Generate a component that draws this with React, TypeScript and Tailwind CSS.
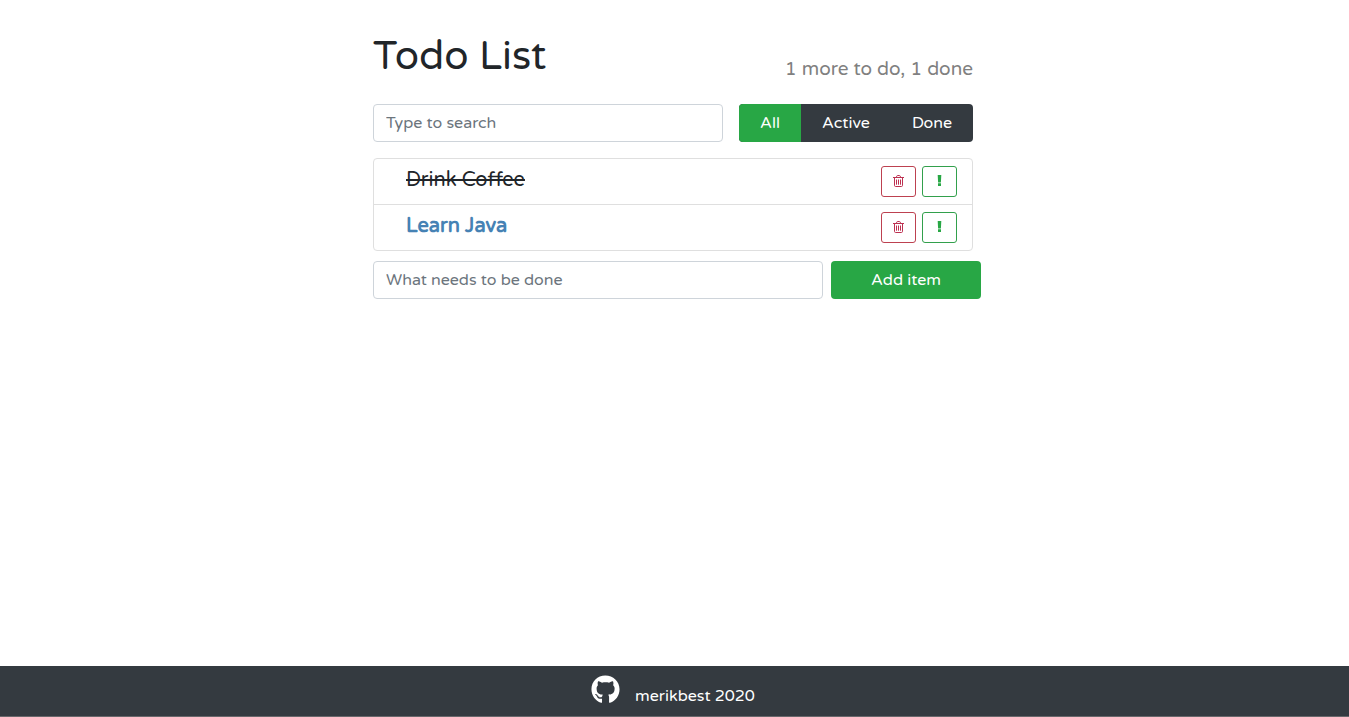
import { useState } from "react";
import { FaGithub } from "react-icons/fa";

type Item = { id: number; label: string; important: boolean; done: boolean };
type Filter = "All" | "Active" | "Done";

const filters: Filter[] = ["All", "Active", "Done"];

const filterWidths: Record<Filter, string> = {
  All: "w-[62px]",
  Active: "w-[90px]",
  Done: "flex-1",
};

const initialItems: Item[] = [
  { id: 1, label: "Drink Coffee", important: false, done: true },
  { id: 2, label: "Learn Java", important: true, done: false },
];

function TrashIcon() {
  return (
    <svg viewBox="0 0 11 12" className="h-3 w-[11px]" fill="none" stroke="currentColor" aria-hidden="true">
      <path d="M0 2.5h11M3.3 2.5l.5-1.4q.2-.6.8-.6h1.8q.6 0 .8.6l.5 1.4M1.5 2.5v7.8q0 1.2 1 1.2h6q1 0 1-1.2V2.5" />
      <path d="M3.5 4.5v5.2M5.5 4.5v5.2M7.5 4.5v5.2" />
    </svg>
  );
}

function ExclamationIcon() {
  return (
    <svg viewBox="0 0 5 11" className="h-[11px] w-[5px]" fill="currentColor" aria-hidden="true">
      <path d="M.7 0h3.6l-.4 7.4H1.1zM1 8.3h3V11H1z" />
    </svg>
  );
}

export default function App() {
  const [items, setItems] = useState(initialItems);
  const [filter, setFilter] = useState<Filter>("All");
  const [term, setTerm] = useState("");
  const [draft, setDraft] = useState("");

  const doneCount = items.filter((item) => item.done).length;
  const visible = items.filter(
    (item) =>
      item.label.toLowerCase().includes(term.toLowerCase()) &&
      (filter === "All" || (filter === "Done") === item.done),
  );

  const toggle = (id: number, key: "done" | "important") =>
    setItems(items.map((item) => (item.id === id ? { ...item, [key]: !item[key] } : item)));

  return (
    <div className="flex min-h-screen flex-col bg-white font-['Varela_Round','Noto_Sans',sans-serif] text-base text-[#212529]">
      <main className="flex-1 pr-[3px]">
        <div className="mx-auto mt-8 max-w-[600px]">
          <header className="flex items-end justify-between">
            <h1 className="text-[40px] leading-[48px]">Todo List</h1>
            <h2 className="text-[19px] leading-[22px] text-[#808080]">
              {items.length - doneCount} more to do, {doneCount} done
            </h2>
          </header>

          <div className="mt-6 flex gap-4">
            <input
              type="text"
              aria-label="Search"
              placeholder="Type to search"
              value={term}
              onChange={(e) => setTerm(e.target.value)}
              className="h-[38px] min-w-0 flex-1 rounded border border-[#ced4da] px-3 placeholder:text-[#6c757d]"
            />
            <div className="flex w-[234px] overflow-hidden rounded bg-[#343a40] text-white">
              {filters.map((name) => (
                <button
                  key={name}
                  type="button"
                  aria-pressed={filter === name}
                  onClick={() => setFilter(name)}
                  className={`${filterWidths[name]} ${filter === name ? "bg-[#28a745]" : ""}`}
                >
                  {name}
                </button>
              ))}
            </div>
          </div>

          <ul className="mt-4 divide-y divide-[#dfdfdf] rounded border border-[#dfdfdf]">
            {visible.map((item) => (
              <li key={item.id} className="flex items-start justify-between py-[7px] pr-[15px] pl-8 text-xl leading-7">
                <button
                  type="button"
                  onClick={() => toggle(item.id, "done")}
                  className={`${item.done ? "line-through" : ""} ${item.important ? "font-bold text-[#4682b4]" : ""}`}
                >
                  {item.label}
                </button>
                <div className="flex gap-[6px]">
                  <button
                    type="button"
                    aria-label={`Delete ${item.label}`}
                    onClick={() => setItems(items.filter((other) => other.id !== item.id))}
                    className="flex h-[31px] w-[35px] items-start justify-center rounded-[3px] border border-[#bd4150] pt-2 text-[#bd3050]"
                  >
                    <TrashIcon />
                  </button>
                  <button
                    type="button"
                    aria-label={`Mark ${item.label} important`}
                    onClick={() => toggle(item.id, "important")}
                    className="flex h-[31px] w-[35px] items-start justify-center rounded-[3px] border border-[#32a04c] pt-2 text-[#28a745]"
                  >
                    <ExclamationIcon />
                  </button>
                </div>
              </li>
            ))}
          </ul>

          <form
            className="mt-[10px] -mr-2 flex gap-2"
            onSubmit={(e) => {
              e.preventDefault();
              if (!draft.trim()) return;
              setItems([...items, { id: Date.now(), label: draft, important: false, done: false }]);
              setDraft("");
            }}
          >
            <input
              type="text"
              aria-label="New item"
              placeholder="What needs to be done"
              value={draft}
              onChange={(e) => setDraft(e.target.value)}
              className="h-[38px] min-w-0 flex-1 rounded border border-[#ced4da] px-3 placeholder:text-[#6c757d]"
            />
            <button type="submit" className="w-[150px] rounded bg-[#28a745] text-white">
              Add item
            </button>
          </form>
        </div>
      </main>

      <footer className="flex h-[51px] justify-center gap-[15px] border-b border-[#68676b] bg-[#343a40] pr-[3px] text-white">
        <a href="https://github.com/merikbest" aria-label="GitHub" className="pt-[9px]">
          <FaGithub className="size-[29px]" />
        </a>
        <p className="pt-[18px]">merikbest 2020</p>
      </footer>
    </div>
  );
}
